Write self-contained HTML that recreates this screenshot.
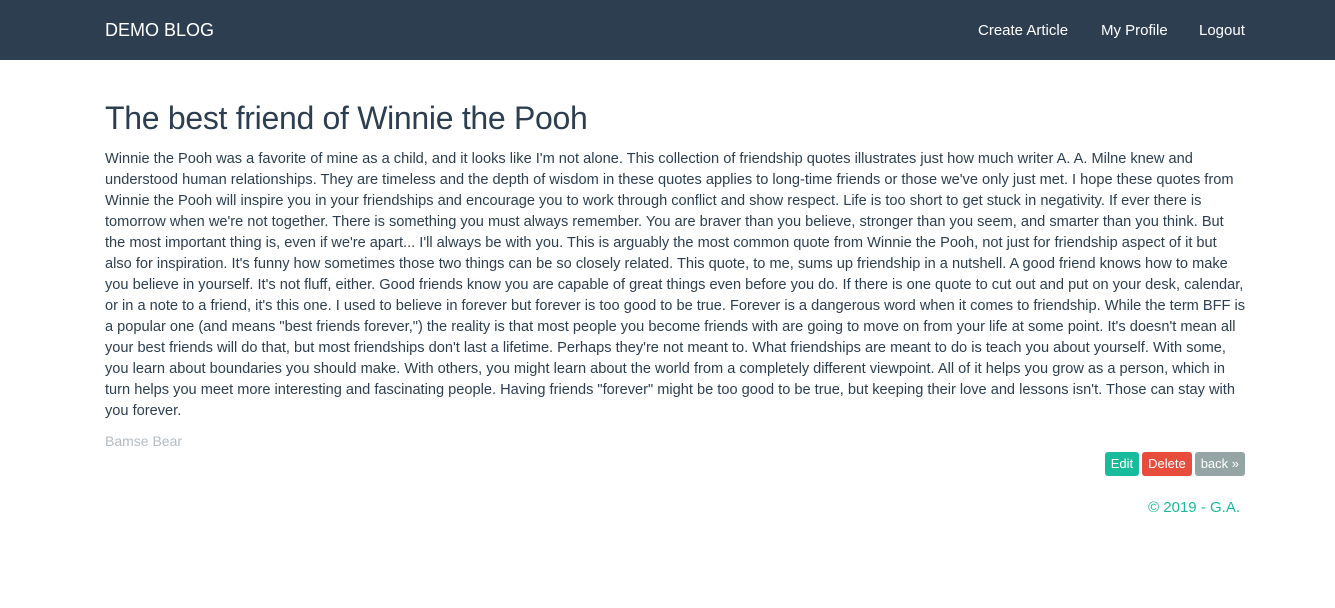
<!DOCTYPE html>
<html><head><meta charset="utf-8"><style>
body{margin:0;font-family:"Liberation Sans",sans-serif;color:#2c3e50;background:#fff;width:1335px;height:608px;overflow:hidden}
.nav{height:60px;background:#2c3e50;position:relative;color:#fff}
.brand{position:absolute;left:105px;top:20px;font-size:18px}
.l{position:absolute;top:22px;font-size:15px}
.c{position:absolute;left:105px;width:1140px}
h1{position:absolute;left:105px;top:100px;margin:0;font-weight:normal;font-size:32px;letter-spacing:-0.3px}
.p{top:149px;font-size:14.6px;line-height:21px;white-space:nowrap}
.auth{top:433px;color:#b4bcc2;font-size:14px}
.btns{position:absolute;right:90px;top:452px;display:flex;gap:3px}
.b{color:#fff;font-size:13px;height:24px;line-height:24px;padding:0 6px;border-radius:3px}
.f{position:absolute;right:95px;top:499px;color:#18bc9c;font-size:15px}
</style></head><body>
<div class="nav"><div class="brand">DEMO BLOG</div><span class="l" style="left:978px">Create Article</span><span class="l" style="left:1101px">My Profile</span><span class="l" style="left:1199px">Logout</span></div>
<h1>The best friend of Winnie the Pooh</h1>
<div class="c p">Winnie the Pooh was a favorite of mine as a child, and it looks like I'm not alone. This collection of friendship quotes illustrates just how much writer A. A. Milne knew and<br>understood human relationships. They are timeless and the depth of wisdom in these quotes applies to long-time friends or those we've only just met. I hope these quotes from<br>Winnie the Pooh will inspire you in your friendships and encourage you to work through conflict and show respect. Life is too short to get stuck in negativity. If ever there is<br>tomorrow when we're not together. There is something you must always remember. You are braver than you believe, stronger than you seem, and smarter than you think. But<br>the most important thing is, even if we're apart... I'll always be with you. This is arguably the most common quote from Winnie the Pooh, not just for friendship aspect of it but<br>also for inspiration. It's funny how sometimes those two things can be so closely related. This quote, to me, sums up friendship in a nutshell. A good friend knows how to make<br>you believe in yourself. It's not fluff, either. Good friends know you are capable of great things even before you do. If there is one quote to cut out and put on your desk, calendar,<br>or in a note to a friend, it's this one. I used to believe in forever but forever is too good to be true. Forever is a dangerous word when it comes to friendship. While the term BFF is<br>a popular one (and means "best friends forever,") the reality is that most people you become friends with are going to move on from your life at some point. It's doesn't mean all<br>your best friends will do that, but most friendships don't last a lifetime. Perhaps they're not meant to. What friendships are meant to do is teach you about yourself. With some,<br>you learn about boundaries you should make. With others, you might learn about the world from a completely different viewpoint. All of it helps you grow as a person, which in<br>turn helps you meet more interesting and fascinating people. Having friends "forever" might be too good to be true, but keeping their love and lessons isn't. Those can stay with<br>you forever.</div>
<div class="c auth">Bamse Bear</div>
<div class="btns"><span class="b" style="background:#18bc9c">Edit</span><span class="b" style="background:#e74c3c">Delete</span><span class="b" style="background:#95a5a6">back »</span></div>
<div class="f">© 2019 - G.A.</div>
</body></html>
